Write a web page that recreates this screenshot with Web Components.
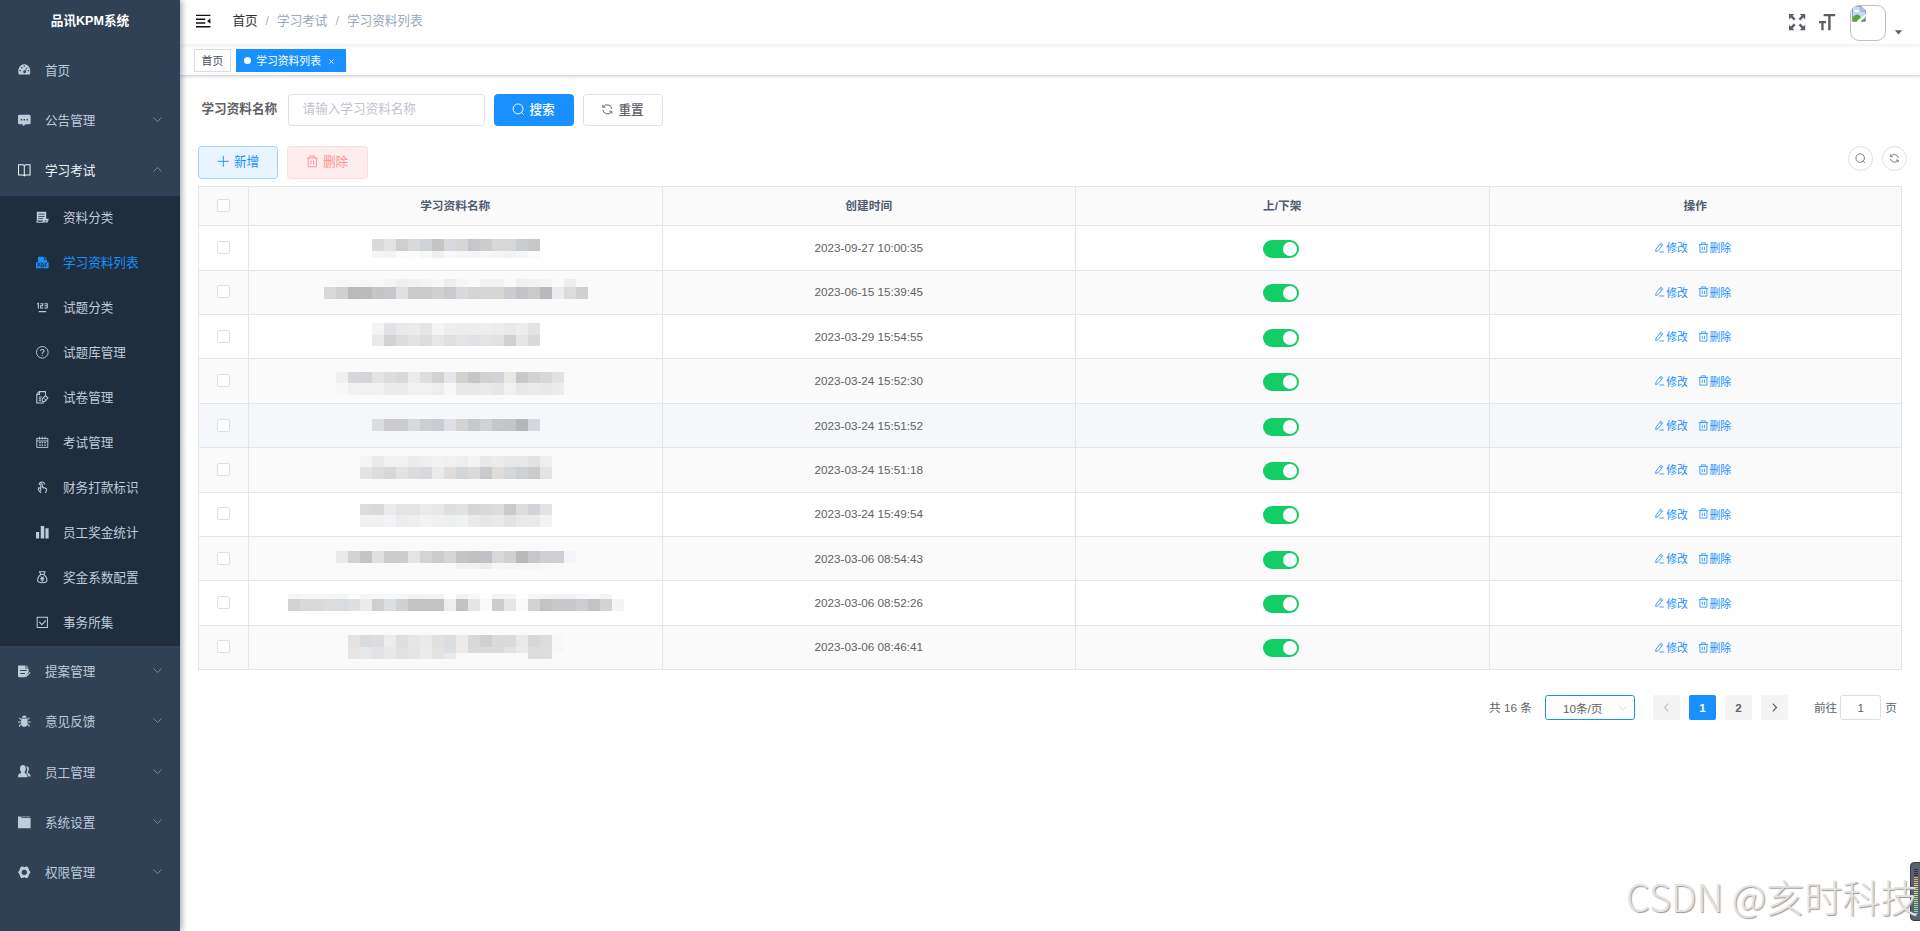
<!DOCTYPE html>
<html lang="zh-CN">
<head>
<meta charset="utf-8">
<title>品讯KPM系统</title>
<style>
	html, body{
		margin: 0;
		height: 100%;
		overflow: hidden;
	}
	body{
		font-family: "Liberation Sans", "Noto Sans CJK SC", sans-serif;
		font-size: 12.6px;
		color: #606266;
		background: #fff;
	}
</style>
</head>
<body>
<kpm-app></kpm-app>

<script>
const ICONS = {
	dashboard: '<path fill="currentColor" fill-rule="evenodd" d="M1 14.500C-1 8 2 1.500 8 1.500s9 6.500 7 13zM2 9h1.700v1.600H2zM4 5h1.700v1.600H4zM7.200 3.200h1.600v1.600H7.200zM12.400 9h1.700v1.600h-1.700zM11.600 5l-3 4.400a1.700 1.700 0 1 0 1 .5l2.600-4.500z"/>',
	message: '<path fill="currentColor" fill-rule="evenodd" d="M1.500 1h13q1.500 0 1.500 1.500v9q0 1.500-1.500 1.500H9.500L7 15.500 5.800 13H1.500Q0 13 0 11.500v-9Q0 1 1.500 1zM3.500 6.500v1.800h1.800V6.500zm3.600 0v1.800h1.800V6.500zm3.600 0v1.800h1.800V6.500z"/>',
	book: '<path fill="none" stroke="currentColor" stroke-width="1.300" d="M.7 1H6.500L8 2 9.500 1h5.800v13H9.500L8 15l-1.500-1H.7zM8 2v13"/>',
	category: '<path fill="currentColor" fill-rule="evenodd" d="M1 1h12v9h3v2h-1v2.500H9V15H1.500L0 14l1-2zm2 2.500v1h8v-1zm0 2.700v1h8v-1zm0 2.700v1h6v-1zM2 12.200v1.300h6.500v-1.300zm9 0v1.200h2v-1.200z"/>',
	pdf: '<path fill="currentColor" d="M2.500 1H10v4h4v2.500H2.500z"/><path fill="currentColor" d="M11 1l3 3h-3z"/><path fill="currentColor" fill-rule="evenodd" d="M0 8h16v7.500H0zM2 9.300v4.900h1v-1.700h1.700V9.300zm1 1h.8v1H3zm3-1v4.900h2.800l1-1v-2.900l-1-1zm1 1h1.400v2.900H7zm4-1v4.900h1v-1.900h1.500v-1H12v-.9h2v-1z"/>',
	number: '<path fill="none" stroke="currentColor" stroke-width="1.400" d="M1.500 4l1.500-1v6.500M5.500 3.500h3V6H5.900v2.800H9M10.500 3.500h3.800v5.300h-3.800M11 6.100h3.200M3.500 13.500h9.500"/>',
	question: '<circle cx="8" cy="8" r="7.400" fill="none" stroke="currentColor" stroke-width="1.200"/><path fill="none" stroke="currentColor" stroke-width="1.400" d="M5.800 6.500c0-3 4.400-3 4.400-.3 0 1.500-2.200 1.600-2.200 3.500M8 11v1.500"/>',
	paper: '<path fill="none" stroke="currentColor" stroke-width="1.300" d="M10 15.200H1V4l3-3.200h8v4M1 4.500h3.500V1M3.500 7.500h4M3.500 10h3M3.500 12.500h3M8 10l4-4.200 3.200 3.200-4.400 4.500L8 13z"/><path stroke="currentColor" d="M10 9l3 3"/>',
	calendar: '<path fill="none" stroke="currentColor" stroke-width="1.200" d="M1 3h14v11.500H1zM1 6.300h14M4.500 1v3.500M8 1v3.500M11.500 1v3.500"/><path fill="none" stroke="currentColor" stroke-width="1.500" d="M4 8.500h2M7 8.500h2M10.500 8.500h2M4 11.500h2M7 11.500h2M10.500 11.500h2"/>',
	finger: '<path fill="none" stroke="currentColor" stroke-width="1.300" d="M4 5c0-5 7-5 7-.5M6 13V4.500c0-1.500 2-1.500 2 0V8c1-.8 2 0 2 .8 1-.8 2 0 2 .8 1-.5 1.500.2 1.500 1 0 2-.5 3-1.500 4.500M6 9.500l-2.500-1C2.500 10 4 13 6.500 15"/>',
	bars: '<path fill="currentColor" d="M0 7.500h4V16H0zM6 0h4.500v16H6zM12 3h4v13h-4z"/>',
	money: '<path fill="none" stroke="currentColor" stroke-width="1.300" d="M4.500 1h7L10 4.500H6zM6 4.500C2.500 7 2 9 2 11.500 2 14 4 15 8 15s6-1 6-3.500C14 9 13.500 7 10 4.500M6 7l2 2 2-2M8 9v4.500M5.500 9.500h5M5.500 11.500h5"/>',
	check: '<path fill="none" stroke="currentColor" stroke-width="1.300" d="M1.500 1.500h13v13h-13zM4 7.500l3.500 3.500 5-5.500"/>',
	form: '<path fill="currentColor" fill-rule="evenodd" d="M0 .5h9.500v4h4v4.500l-5 6.500H1L0 14.500zm3 5.700v1.300h8V6.200zm0 4v1.300h6v-1.300z"/><path fill="currentColor" d="M10.500.5l3 3h-3zM15 9l1 1-5.500 5.500H9.500V14z"/>',
	bug: '<path fill="currentColor" d="M5 3.500a3 3 0 0 1 6 0zM4 4.500h8V11c0 2-1.500 4-4 4s-4-2-4-4z"/><path fill="none" stroke="currentColor" stroke-width="1.300" d="M1.500 3.500L4 6M14.500 3.500L12 6M0 8.800h4M16 8.800h-4M2 15v-2l2.500-1.500M14 15v-2l-2.500-1.500"/>',
	people: '<path fill="currentColor" d="M2.500 4.500C2.500 1.500 4 0 6.200 0S10 1.500 10 4.500c0 2-.8 3.500-1.500 4.200v1.500c2.500.8 3.500 2 3.500 5.300H0c0-3.300 1-4.500 4-5.300V8.700C3 8 2.500 6.500 2.500 4.500zM10.500 1.500c3.500-.5 4.500 4.500 2 7v1.200c2.500 1 3.500 2.300 3.500 4.800h-3c0-2-1-3.800-2.500-4.700 1.500-2.500 1.500-6 0-8.300z"/>',
	system: '<path fill="currentColor" fill-rule="evenodd" d="M0 .5h4.500v2H16v13H0zM5.500.5h4v1h-4zM10.500.5H15v1h-4.500z"/>',
	gear: '<path fill="currentColor" fill-rule="evenodd" d="M4 .7h2l2 1 2-1h2l1.500 2.500.5 2L16 8l-2 2.800-.5 2L12 15.300h-2l-2-1-2 1H4l-1.500-2.500-.5-2L0 8l2-2.800.5-2zM8 4.700a3.300 3.300 0 1 0 0 6.600 3.300 3.300 0 0 0 0-6.600z"/>',
	fold: '<path fill="none" stroke="currentColor" stroke-width="1.500" d="M0 1.600h16M0 14.200h16M0 5.800h10.300M0 10h10.300"/><path fill="currentColor" d="M12.300 7.900L16 5v5.800z"/>',
	fullscreen: '<path transform="scale(.125)" fill="currentColor" d="M38.470 52L52 38.462l-23.648-23.670L43.209 0H.035L0 43.137l14.757-14.865L38.470 52zm74.773 47.726L89.526 76 76 89.536l23.648 23.672L84.795 128h43.174L128 84.863l-14.757 14.863zM89.538 52l23.668-23.648L128 43.207V.038L84.866 0 99.730 14.760 76 38.472 89.538 52zM38.460 76L14.792 99.651 0 84.794v43.173l43.137.033-14.865-14.757L52 89.530 38.460 76z"/>',
	size: '<path transform="scale(.125)" fill="currentColor" d="M0 54.857h54.796v18.286H36.531V128H18.265V73.143H0V54.857zm127.857-36.571H91.935V128H72.456V18.286H36.534V0h91.326l-.003 18.286z"/>',
	down: '<path fill="none" stroke="currentColor" stroke-width="1.500" d="M1 4.500l7 7 7-7"/>',
	up: '<path fill="none" stroke="currentColor" stroke-width="1.500" d="M1 11.500l7-7 7 7"/>',
	left: '<path fill="none" stroke="currentColor" stroke-width="2.200" d="M11 1L4.500 8l6.500 7"/>',
	right: '<path fill="none" stroke="currentColor" stroke-width="2.200" d="M5 1l6.500 7L5 15"/>',
	search: '<circle cx="7.700" cy="7.500" r="6.300" fill="none" stroke="currentColor" stroke-width="1.200"/><path stroke="currentColor" stroke-width="1.200" d="M12.200 12l2.500 2.700"/>',
	refresh: '<path fill="none" stroke="currentColor" stroke-width="1.200" d="M2.300 5.500V2.300M2.300 5.300h3.200M2.800 5A6 6 0 0 1 13.800 7.500M13.700 13.700v-3.200h-3.200M13.200 11A6 6 0 0 1 2.200 8.500"/>',
	plus: '<path stroke="currentColor" stroke-width="1.200" d="M8 1v14M1 8h14"/>',
	trash: '<path fill="none" stroke="currentColor" stroke-width="1.200" d="M1 3.800h14M5 3.500V1.300h6v2.200M2.800 4v11h10.400V4M6.300 7v5M9.700 7v5"/>',
	edit: '<path fill="none" stroke="currentColor" stroke-width="1.200" d="M3 10.500L10 1.800l3 2.300-7 8.800-3.500 1.300zM8.500 3.800l3 2.300M8 14.800h7"/>',
	caret: '<path fill="currentColor" d="M1.500 4h13L8 11.500z"/>'
};

class KpmIcon extends HTMLElement{
	connectedCallback(){
		const s = this.getAttribute("size") || 12.6;
		this.attachShadow({mode: "open"}).innerHTML = `
		<style>
			:host{ display: inline-flex; flex: none; }
			svg{ display: block; width: ${s}px; height: ${s}px; overflow: visible; }
		</style>
		<svg viewBox="0 0 16 16">${ICONS[this.getAttribute("name")]}</svg>`;
	}
}

class KpmMenuItem extends HTMLElement{
	connectedCallback(){
		const arrow = this.getAttribute("arrow");
		this.attachShadow({mode: "open"}).innerHTML = `
		<style>
			:host{ display: block; color: #bfcbd9; }
			:host([opened]){ color: #f4f4f5; }
			:host([active]){ color: #1890ff; }
			.title{
				display: flex;
				align-items: center;
				box-sizing: border-box;
				height: 50.4px;
				padding: 0 18px 1px 18px;
				white-space: nowrap;
			}
			:host([sub]) .title{ height: 45px; padding-left: 36px; padding-bottom: 2px; }
			.text{ flex: 1; margin-left: 14.400px; padding-bottom: 1px; }
			:host([sub]) .text{ padding-bottom: 2px; }
			.arrow{ color: #8792a0; margin-top: -1px; }
			.children{ background: #1f2d3d; }
		</style>
		<div class="title">
			<kpm-icon name="${this.getAttribute("icon")}"></kpm-icon>
			<span class="text">${this.getAttribute("label")}</span>
			${arrow ? `<kpm-icon class="arrow" name="${arrow}" size="9"></kpm-icon>` : ""}
		</div>
		<div class="children"><slot></slot></div>`;
	}
}

class KpmSidebar extends HTMLElement{
	connectedCallback(){
		const sub = [
			["category", "资料分类"],
			["pdf", "学习资料列表"],
			["number", "试题分类"],
			["question", "试题库管理"],
			["paper", "试卷管理"],
			["calendar", "考试管理"],
			["finger", "财务打款标识"],
			["bars", "员工奖金统计"],
			["money", "奖金系数配置"],
			["check", "事务所集"]
		];
		const rest = [
			["form", "提案管理"],
			["bug", "意见反馈"],
			["people", "员工管理"],
			["system", "系统设置"],
			["gear", "权限管理"]
		];
		this.attachShadow({mode: "open"}).innerHTML = `
		<style>
			:host{
				display: block;
				width: 180px;
				flex: none;
				background: #304156;
				box-shadow: 2px 0 6px rgba(0, 21, 41, .35);
				z-index: 2;
			}
			h1{
				margin: 0;
				height: 45px;
				line-height: 43px;
				text-align: center;
				font-size: 12.6px;
				font-weight: 600;
				color: #fff;
			}
		</style>
		<h1>品讯KPM系统</h1>
		<kpm-menu-item icon="dashboard" label="首页"></kpm-menu-item>
		<kpm-menu-item icon="message" label="公告管理" arrow="down"></kpm-menu-item>
		<kpm-menu-item icon="book" label="学习考试" arrow="up" opened>
			${sub.map(m => `<kpm-menu-item sub icon="${m[0]}" label="${m[1]}" ${m[0] == "pdf" ? "active" : ""}></kpm-menu-item>`).join("")}
		</kpm-menu-item>
		${rest.map(m => `<kpm-menu-item icon="${m[0]}" label="${m[1]}" arrow="down"></kpm-menu-item>`).join("")}`;
	}
}

class KpmNavbar extends HTMLElement{
	connectedCallback(){
		this.attachShadow({mode: "open"}).innerHTML = `
		<style>
			:host{
				display: flex;
				height: 45px;
				box-shadow: 0 1px 4px rgba(0, 21, 41, .08);
				position: relative;
			}
			.hamburger{ color: #111; padding: 14px 22px 0 16px; }
			.crumbs{
				display: flex;
				line-height: 42px;
				color: #97a8be;
				white-space: nowrap;
			}
			.crumbs b{ color: #303133; font-weight: 400; }
			.crumbs i{ margin: 0 8px; font-style: normal; color: #b0b5be; }
			.right{
				display: flex;
				margin-left: auto;
				padding-right: 17px;
				color: #5a5e66;
			}
			.right > kpm-icon{ margin: 14px 14px 0 0; }
			.avatar{
				box-sizing: border-box;
				width: 36px;
				height: 36px;
				margin: 5px 8px 0 1px;
				border: 1px solid #c0c0c0;
				border-radius: 9px;
				overflow: hidden;
			}
			.avatar svg{ display: block; }
			.right .caret{ margin: 28px 0 0; }
		</style>
		<kpm-icon class="hamburger" name="fold" size="14.400"></kpm-icon>
		<div class="crumbs"><b>首页</b><i>/</i><span>学习考试</span><i>/</i><span>学习资料列表</span></div>
		<div class="right">
			<kpm-icon name="fullscreen" size="16.200"></kpm-icon>
			<kpm-icon name="size" size="16.200"></kpm-icon>
			<div class="avatar">
				<svg width="16" height="16" viewBox="0 0 16 16">
					<path fill="#c3d9f7" d="M1 0h9l5 5v3L6 15H1z"/>
					<path fill="#fff" d="M3 5q1-2 3-1 2 0 2 2H3z"/>
					<path fill="#53a83c" d="M1 12q4-5 7-3l2 2-4 4H1zM10 15l5-4v4z"/>
					<path fill="none" stroke="#979ba2" d="M6 15.500H1.500V.5H10l4.500 4.500V8M10 .5V5h4.500M10 15.500h4.500V11"/>
				</svg>
			</div>
			<kpm-icon class="caret" name="caret" size="9"></kpm-icon>
		</div>`;
	}
}

class KpmTags extends HTMLElement{
	connectedCallback(){
		this.attachShadow({mode: "open"}).innerHTML = `
		<style>
			:host{
				display: flex;
				gap: 5px;
				box-sizing: border-box;
				height: 31px;
				padding: 4px 0 0 14px;
				border-bottom: 1px solid #d8dce5;
				box-shadow: 0 1px 3px rgba(0, 0, 0, .12), 0 0 3px rgba(0, 0, 0, .04);
				font-size: 10.800px;
			}
			.tag{
				display: flex;
				align-items: center;
				box-sizing: border-box;
				height: 23px;
				padding: 0 7px 1px 6.600px;
				border: 1px solid #d8dce5;
				color: #495060;
			}
			.active{
				color: #fff;
				background: #1890ff;
				border-color: #1890ff;
				padding: 0 11px 1px 7px;
			}
			.active::before{
				content: "";
				width: 7px;
				height: 7px;
				margin-right: 5px;
				border-radius: 50%;
				background: #fff;
			}
			.close{ width: 5px; margin: 2px 0 0 8px; }
			.close svg{ display: block; }
		</style>
		<span class="tag">首页</span>
		<span class="tag active">学习资料列表<span class="close"><svg width="5" height="5" viewBox="0 0 5 5"><path stroke="#fff" stroke-width=".9" d="M.5 .5l4 4M4.500 .5l-4 4"/></svg></span></span>`;
	}
}

class KpmButton extends HTMLElement{
	connectedCallback(){
		this.attachShadow({mode: "open"}).innerHTML = `
		<style>
			:host{
				display: flex;
				align-items: center;
				justify-content: center;
				gap: 4.500px;
				box-sizing: border-box;
				width: 80px;
				height: 32.400px;
				padding-bottom: 3px;
				border: 1px solid #dcdfe6;
				border-radius: 3.600px;
				font-weight: 500;
				white-space: nowrap;
			}
			kpm-icon{ margin-top: 1px; }
			:host([type=primary]){ color: #fff; background: #1890ff; border-color: #1890ff; }
			:host([type=add]){ color: #1890ff; background: #e8f4ff; border-color: #a3d3ff; font-weight: 400; height: 33px; }
			:host([type=danger]){ color: #ff9292; background: #ffeded; border-color: #ffdbdb; font-weight: 400; width: 81px; height: 33px; }
			:host([circle]){ width: 25.500px; height: 25.500px; border-radius: 50%; padding: 0 0 1px; gap: 0; }
		</style>
		<kpm-icon name="${this.getAttribute("icon")}" size="${this.hasAttribute("circle") ? 10.8 : 12.6}"></kpm-icon>
		<slot></slot>`;
	}
}

/* censored name: strips of 12px blocks, "-" is an empty block */
class KpmMosaic extends HTMLElement{
	connectedCallback(){
		const strips = this.getAttribute("data").split("|").map(s => {
			const cells = s.trim().split(" ");
			const h = cells.shift();
			return `<div style="height:${h}px">` + cells.map(c =>
				`<i style="background:${c == "-" ? "none" : "#" + (c.length == 2 ? c + c + c : c)}"></i>`
			).join("") + "</div>";
		}).join("");
		this.attachShadow({mode: "open"}).innerHTML = `
		<style>
			:host{ display: block; align-self: flex-start; margin-left: .5px; }
			div{ display: flex; }
			i{ width: 12px; }
		</style>${strips}`;
	}
}

class KpmTable extends HTMLElement{
	connectedCallback(){
		/* date, space above the mosaic, mosaic */
		const rows = [
			["2023-09-27 10:00:35", 13, "12 dcdad9 e2e4e3 cdcfd1 d9 cfd3d7 c7c4c5 d6d9dd d5 c5c6c9 cd d6d7d9 d7 cacdd0 c5c6c8|7 f4 f4 fc fd f8 ef f8 f5 f5 f7 f3f5f4 f1f3f2 f5 fb"],
			["2023-06-15 15:39:45", 8.6, "8 - f7 f8 f6f7f7 f8faf9 f5 ef f2 f5 f7 ed f6 f9 f2f4f3 f1f3f2 f9 f0 f2 f4f6f5 - ee f8|12 d8 cf b9babb bb c5c5c7 c7c7c9 dfe0e3 c8c9c8 c9 d0 c9cacc d8dae0 d4 d6 d6d7d4 cacccf c2c3c5 c9 b8b9bd ebecef db cfd0d2"],
			["2023-03-29 15:54:55", 8, "12 f3f3f1 e1e2e5 e8e9ea eb e5 f4 ee ed ecedef ee ebedec e9 ed e3|11 e9 d1d2d3 dd e3 dcdddf e7 e0 e4 e0e1e4 e6e4e2 e0e2e0 d1d1d4 e5e6e8 da"],
			["2023-03-24 15:52:30", 12.6, "11 f1f0ef d5d7da d3d5d8 e4 dd d7dadc eb de d2 e5e6e9 d1d1ce c6c6c8 d0d2d1 d1d3d9 e9e8e6 c7c8ca d1d2d4 d7d8da e1e2e4 -|12 f7 f0f2f1 f0 f1f1ef eaeceb ebedec f0 f0 ed f7 e7 e6e7e8 e8eae9 e5e6e8 f0 e8 e9ebea e8 ebedec -"],
			["2023-03-24 15:51:52", 15.2, "12 dcdddf cb cacdcf d9dadc cecfd2 c9cbd5 dfe0e5 d3 c6c9cd d1d2d6 c5c8cb c4c5c9 b5b6b8 d5d8dd"],
			["2023-03-24 15:51:18", 8, "11 f5 e9 f1 f0 ebedec ee f2 f0 ed f2f4f3 e8 edece9 e7 e6e7e9 e2 ee|12 e3 dcdedc d6d8da e2 dedcda d7d9dd e9eaec dfdcda d4d6db da c9cacc dfdcda d5d7dc cfd0d2 cbcbc9 e3e4e7"],
			["2023-03-24 15:49:54", 11.4, "11 db d9 e9ebed e3e5e3 e4e4e1 e8eaec eae8e6 dddfe4 e1 d6 d9dadc dd c9 dc d2d3d7 e2e3e6|12 f1 f1 f2f3f6 ed ef f2f3f5 f0 eef0ef f0f2f4 ea e6e8e7 e9 e1e4e2 e9 ea f2f4f3"],
			["2023-03-06 08:54:43", 14, "12 e9e9e7 d2d3d5 c5 e0 cc cd e1e5e6 d3d4d6 cbccce d7d5d3 c1c3c7 bfc1c0 c0c1c5 d7d8db d0 b9 c5c6c9 cecfd1 cecfd2 f4f5f8|6 - - - - - - - - - f7 f1f3f2 f2 ed f6 f5 f6 f6 f7 f8 -"],
			["2023-03-06 08:52:26", 12.6, "5 f5 f6 f6 f5 f5 fb f5 f7 f7 f6 f1f3f2 f3 f3 - f2 f7 - f4 f5 - f6 f4 f2 f3 f6 f8 f2f4f3 -|12 d2 d8 d9dadd dfddda d8dce0 dddfe2 e9ecea cf dcdfe2 d0 c3 c3 c3 ecedf0 c2 e5 f9fbfa cd e6 fa d2 c2c4c2 c6c8ca c7c8cb cdced1 c3 d1d4d1 f3f4f7"],
			["2023-03-06 08:46:41", 9, "12 e5e3e1 dadbdd dd ebedec de e6 e9 e0e0dd dbdcdf ecebe9 d7d8da d0 d9 d9dadc e9e9e7 d8 dbdcde f8|6 e8e6e5 e6e7e9 e2e3e6 e8 e1 e4 eb e2e4e3 dedfe2 edecea da db db e1e2e6 eaeae8 dd dddede f7f7fa|6 e8e6e5 e6e7e9 e2e3e6 e8 e1 e4 eb e2e4e3 e8e9eb - - - - - - dd dddede -"]
		];
		this.attachShadow({mode: "open"}).innerHTML = `
		<style>
			:host{
				display: block;
				border: 1px solid #dfe6ec;
				border-bottom: 0;
				font-size: 11.700px;
			}
			.row{
				display: grid;
				grid-template-columns: 50px repeat(3, 413.500px) 1fr;
				box-sizing: border-box;
				height: 44.400px;
				border-bottom: 1px solid #dfe6ec;
			}
			.row > div{
				display: flex;
				align-items: center;
				justify-content: center;
				min-width: 0;
				border-right: 1px solid #dfe6ec;
				box-sizing: border-box;
				padding-bottom: 1px;
			}
			.row > div:last-child{ border-right: 0; }
			.row:nth-of-type(odd){ background: #fafafa; }
			.row.head{
				height: 39.300px;
				background: #fafafa;
				color: #515a6e;
				font-weight: 600;
			}
			.row.head > div{ padding-bottom: 3px; }
			.row.head > div:first-child{ padding-bottom: 1px; }
			.row.hover{ background: #f5f7fa; }
			.box{
				box-sizing: border-box;
				width: 13px;
				height: 13px;
				border: 1px solid #dcdfe6;
				border-radius: 2px;
				background: #fff;
			}
			.switch{
				display: flex;
				justify-content: flex-end;
				box-sizing: border-box;
				width: 36px;
				height: 18px;
				margin-top: 3px;
				margin-right: 2px;
				padding: 2px;
				border-radius: 9px;
				background: #13ce66;
			}
			.switch::after{
				content: "";
				width: 14px;
				height: 14px;
				border-radius: 50%;
				background: #fff;
			}
			.link{
				display: flex;
				align-items: center;
				gap: 1px;
				margin-right: 10px;
				font-size: 10.800px;
				color: #1890ff;
			}
			.link + .link{ margin-right: 5px; }
		</style>
		<div class="row head">
			<div><span class="box"></span></div>
			<div>学习资料名称</div><div>创建时间</div><div>上/下架</div><div>操作</div>
		</div>
		${rows.map((r, i) => `
		<div class="row${i == 4 ? " hover" : ""}">
			<div><span class="box"></span></div>
			<div><kpm-mosaic style="margin-top:${r[1]}px" data="${r[2]}"></kpm-mosaic></div>
			<div>${r[0]}</div>
			<div><span class="switch"></span></div>
			<div>
				<span class="link"><kpm-icon name="edit" size="10.800"></kpm-icon>修改</span>
				<span class="link"><kpm-icon name="trash" size="10.800"></kpm-icon>删除</span>
			</div>
		</div>`).join("")}`;
	}
}

class KpmPagination extends HTMLElement{
	connectedCallback(){
		this.attachShadow({mode: "open"}).innerHTML = `
		<style>
			:host{
				display: flex;
				justify-content: flex-end;
				align-items: center;
				height: 25px;
				font-size: 11.700px;
				white-space: nowrap;
			}
			.label{ padding-bottom: 2px; }
			.select{
				display: flex;
				align-items: center;
				box-sizing: border-box;
				width: 90px;
				height: 25px;
				margin: 0 18px 0 13px;
				padding: 0 7px 1px 17px;
				border: 1px solid #1890ff;
				border-radius: 2.700px;
				justify-content: space-between;
			}
			.select kpm-icon{ color: #c0c4cc; margin-top: 2px; }
			.page{
				display: flex;
				align-items: center;
				justify-content: center;
				width: 27px;
				height: 25px;
				margin-right: 9px;
				border-radius: 2px;
				background: #f4f4f5;
				font-weight: 700;
			}
			.page.disabled{ color: #c0c4cc; }
			.page.active{ color: #fff; background: #1890ff; }
			.jump{
				box-sizing: border-box;
				width: 41px;
				height: 25px;
				line-height: 23px;
				margin: 0 4px 0 3px;
				border: 1px solid #dcdfe6;
				border-radius: 2.700px;
				text-align: center;
			}
			.goto{ margin-left: 17px; }
		</style>
		<span class="label">共 16 条</span>
		<span class="select">10条/页<kpm-icon name="down" size="8"></kpm-icon></span>
		<span class="page disabled"><kpm-icon name="left" size="9"></kpm-icon></span>
		<span class="page active">1</span>
		<span class="page">2</span>
		<span class="page"><kpm-icon name="right" size="9"></kpm-icon></span>
		<span class="label goto">前往</span>
		<span class="jump">1</span>
		<span class="label">页</span>`;
	}
}

/* side gauge and the signature in the bottom right corner */
class KpmOverlay extends HTMLElement{
	connectedCallback(){
		this.attachShadow({mode: "open"}).innerHTML = `
		<style>
			:host{
				position: absolute;
				right: 0;
				bottom: 0;
				width: 300px;
				height: 72px;
				overflow: hidden;
				z-index: 3;
			}
			.gauge{
				position: absolute;
				left: 290px;
				top: 3px;
				width: 20px;
				height: 59px;
				box-sizing: border-box;
				border: 1px solid #3b3f49;
				border-radius: 4px;
				background: #5b6070;
			}
			.gauge::after{
				content: "";
				position: absolute;
				left: 3px;
				top: 6px;
				width: 4px;
				height: 46px;
				background:
					repeating-linear-gradient(transparent 0 1px, #5b6070 1px 2px),
					linear-gradient(#2c303a 0 8px, #e9a26c 8px, #ebd579 18px, #c6e48a 28px, #6fdcc0 46px);
			}
			.mark{
				position: absolute;
				left: 6px;
				top: 11px;
				font: 300 38px/52px "Noto Sans CJK SC", sans-serif;
				color: #e2e2e2;
				text-shadow: 1px 1px 1px #999;
				white-space: nowrap;
			}
		</style>
		<div class="gauge"></div>
		<div class="mark">CSDN @亥时科技</div>`;
	}
}

class KpmApp extends HTMLElement{
	connectedCallback(){
		this.attachShadow({mode: "open"}).innerHTML = `
		<style>
			:host{
				display: flex;
				height: 100vh;
				position: relative;
				overflow: hidden;
			}
			main{ flex: 1; min-width: 0; }
			.content{ padding: 18px 18px 0; }
			.search{ display: flex; gap: 9px; }
			label{
				padding-left: 3.500px;
				margin-right: 1.500px;
				line-height: 30px;
				font-weight: 700;
			}
			.input{
				box-sizing: border-box;
				width: 197px;
				height: 32.400px;
				line-height: 28px;
				padding-left: 14px;
				border: 1px solid #dcdfe6;
				border-radius: 3.600px;
				color: #c0c4cc;
			}
			.tools{
				display: flex;
				gap: 8.500px;
				height: 40px;
				margin: 19.600px -5px 0 0;
			}
			.tools .first{ margin-left: auto; }
			kpm-pagination{ margin: 25px 5px 0 0; }
		</style>
		<kpm-sidebar></kpm-sidebar>
		<main>
			<kpm-navbar></kpm-navbar>
			<kpm-tags></kpm-tags>
			<div class="content">
				<div class="search">
					<label>学习资料名称</label>
					<div class="input">请输入学习资料名称</div>
					<kpm-button type="primary" icon="search">搜索</kpm-button>
					<kpm-button icon="refresh">重置</kpm-button>
				</div>
				<div class="tools">
					<kpm-button type="add" icon="plus">新增</kpm-button>
					<kpm-button type="danger" icon="trash">删除</kpm-button>
					<kpm-button class="first" circle icon="search"></kpm-button>
					<kpm-button circle icon="refresh"></kpm-button>
				</div>
				<kpm-table></kpm-table>
				<kpm-pagination></kpm-pagination>
			</div>
		</main>
		<kpm-overlay></kpm-overlay>`;
	}
}

customElements.define("kpm-icon", KpmIcon);
customElements.define("kpm-menu-item", KpmMenuItem);
customElements.define("kpm-sidebar", KpmSidebar);
customElements.define("kpm-navbar", KpmNavbar);
customElements.define("kpm-tags", KpmTags);
customElements.define("kpm-button", KpmButton);
customElements.define("kpm-mosaic", KpmMosaic);
customElements.define("kpm-table", KpmTable);
customElements.define("kpm-pagination", KpmPagination);
customElements.define("kpm-overlay", KpmOverlay);
customElements.define("kpm-app", KpmApp);
</script>
</body>
</html>
